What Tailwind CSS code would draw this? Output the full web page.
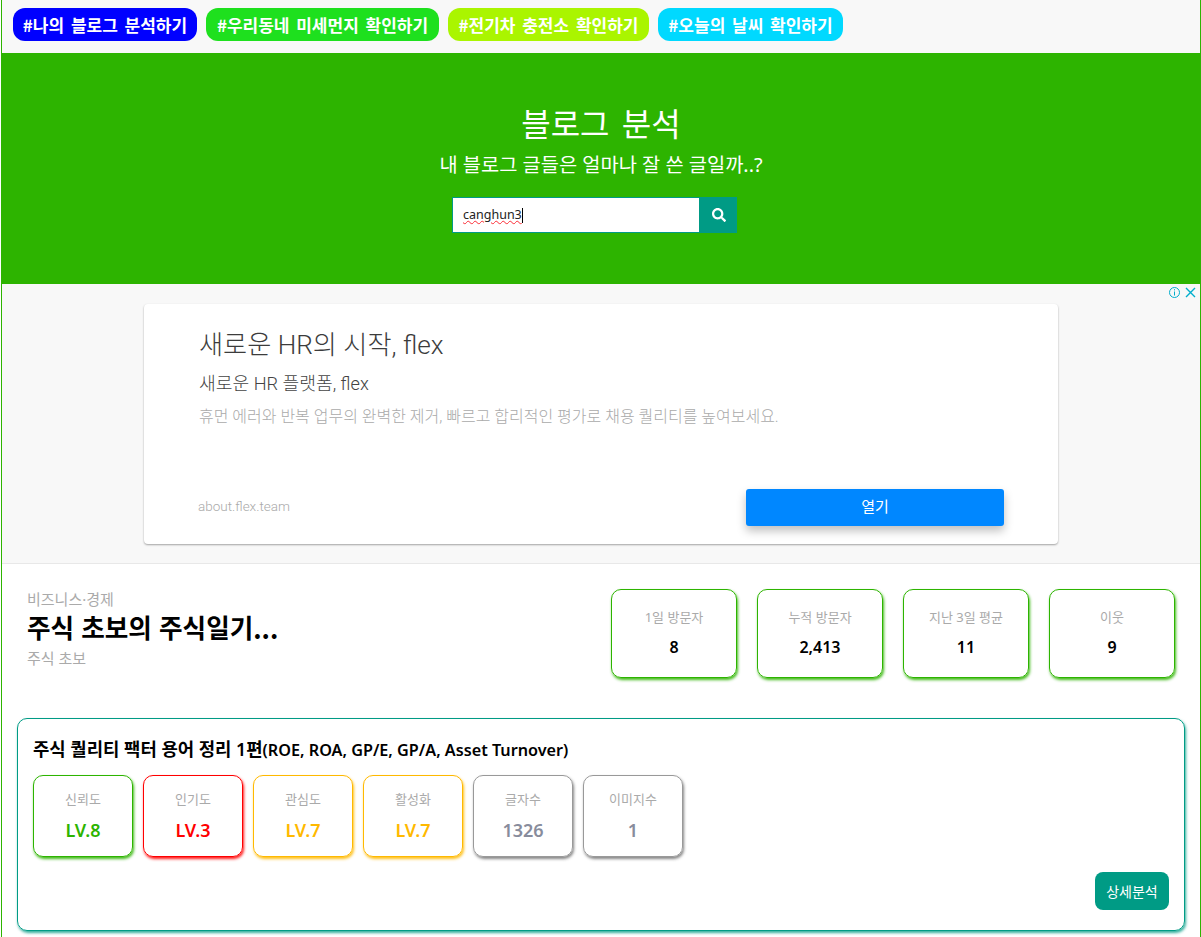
<!DOCTYPE html>
<html lang="ko">
<head>
    <meta charset="UTF-8">
    <title>블로그 분석</title>
    <script src="https://cdn.jsdelivr.net/npm/@tailwindcss/browser@4"></script>
</head>
<body class="bg-white font-['Noto_Sans','Noto_Sans_CJK_KR',sans-serif] overflow-hidden">
    <div class="ml-px w-[1200px] h-[937px] overflow-hidden border-x border-[#2db400]">
        <!-- top tags -->
        <nav class="h-[53px] bg-[#f8f8f8] flex items-start gap-[9px] pt-2 pl-3 -mx-px relative">
            <a class="h-[33px] w-[184px] rounded-xl bg-[#0000ff] text-white text-[17px] [word-spacing:2px] font-bold flex items-center justify-center font-['Noto_Sans_CJK_KR',sans-serif]">#나의 블로그 분석하기</a>
            <a class="h-[33px] w-[233px] rounded-xl bg-[#1ee01e] text-white text-[17px] [word-spacing:2px] font-bold flex items-center justify-center font-['Noto_Sans_CJK_KR',sans-serif]">#우리동네 미세먼지 확인하기</a>
            <a class="h-[33px] w-[201px] rounded-xl bg-[#aaf500] text-white text-[17px] [word-spacing:2px] font-bold flex items-center justify-center font-['Noto_Sans_CJK_KR',sans-serif]">#전기차 충전소 확인하기</a>
            <a class="h-[33px] w-[185px] rounded-xl bg-[#00d9ff] text-white text-[17px] [word-spacing:2px] font-bold flex items-center justify-center font-['Noto_Sans_CJK_KR',sans-serif]">#오늘의 날씨 확인하기</a>
        </nav>

        <!-- hero -->
        <section class="h-[231px] bg-[#2db400] flex flex-col items-center pt-[47px] text-white">
            <h1 class="text-[32px] leading-[48px] font-normal [word-spacing:4px]">블로그 분석</h1>
            <p class="text-[19.8px] leading-[27px] mt-[3px]">내 블로그 글들은 얼마나 잘 쓴 글일까..?</p>
            <div class="flex mt-[19px] mr-[13px]">
                <div class="w-[248px] h-9 bg-white border border-[#009b85] flex items-center pl-[10px] text-[12.5px] text-[#222]">
                    <span class="underline decoration-wavy decoration-red-500 decoration-1">canghun3</span><span class="w-px h-[15px] bg-black"></span>
                </div>
                <button class="w-[37px] h-9 bg-[#009b85] flex items-center justify-center">
                    <svg class="w-[14px] h-[14px]" viewBox="0 0 512 512" fill="white"><path d="M505 442.7L405.3 343c-4.5-4.5-10.6-7-17-7H372c27.6-35.3 44-79.7 44-128C416 93.1 322.9 0 208 0S0 93.1 0 208s93.1 208 208 208c48.3 0 92.7-16.4 128-44v16.3c0 6.4 2.5 12.5 7 17l99.7 99.7c9.4 9.4 24.6 9.4 33.9 0l28.3-28.3c9.4-9.4 9.4-24.6.1-34zM208 336c-70.7 0-128-57.2-128-128 0-70.7 57.2-128 128-128 70.7 0 128 57.2 128 128 0 70.7-57.2 128-128 128z"/></svg>
                </button>
            </div>
        </section>

        <!-- ad -->
        <section class="relative h-[280px] bg-[#f8f8f8] border-b border-[#e8e8e8] pt-5">
            <div class="absolute top-[2px] right-0 flex items-center gap-[3px] pr-[3px] text-[#00aecd]">
                <svg class="w-[13px] h-[13px]" viewBox="0 0 13 13" fill="none" stroke="currentColor"><circle cx="6.5" cy="6.5" r="5"/><path d="M6.5 5.5v4M6.5 3.2v1.2"/></svg>
                <svg class="w-[13px] h-[13px]" viewBox="0 0 13 13" fill="none" stroke="currentColor" stroke-width="1.4"><path d="M2 2l9 9M11 2l-9 9"/></svg>
            </div>
            <div class="ml-[142px] w-[914px] h-[240px] bg-white rounded shadow-[0_1px_2px_rgba(0,0,0,0.35)] flex flex-col pl-[55px] pr-[54px] font-['Roboto','Noto_Sans_CJK_KR',sans-serif]">
                <h2 class="text-[26.2px] leading-[32px] text-[#3c3c3c] font-light mt-[25px]">새로운 HR의 시작, flex</h2>
                <p class="text-[18.2px] leading-[24px] text-[#444] font-light mt-[11px]">새로운 HR 플랫폼, flex</p>
                <p class="text-[16px] leading-[20px] text-[#aaa] font-light mt-[11px]">휴먼 에러와 반복 업무의 완벽한 제거, 빠르고 합리적인 평가로 채용 퀄리티를 높여보세요.</p>
                <div class="flex items-center justify-between mt-auto mb-[18px]">
                    <span class="text-[13.5px] text-[#aaa] font-light -ml-px -mt-[2px]">about.flex.team</span>
                    <button class="w-[258px] h-[37px] bg-[#0087ff] rounded-[3px] text-white text-[15px] shadow-[0_5px_10px_rgba(0,0,0,0.25)]">열기</button>
                </div>
            </div>
        </section>

        <!-- blog info -->
        <section class="flex justify-between pl-[25px] pr-[25px] pt-[25px]">
            <div>
                <p class="text-[15px] leading-[21px] text-[#aaa]">비즈니스·경제</p>
                <h2 class="text-[25.6px] leading-[36px] font-bold text-black font-['Noto_Sans_CJK_KR',sans-serif] -mt-px">주식 초보의 주식일기...</h2>
                <p class="text-[15px] leading-[21px] text-[#aaa] mt-[3px]">주식 초보</p>
            </div>
            <div class="flex gap-5">
                <div class="w-[126px] h-[89px] rounded-[10px] border border-[#2db400] shadow-[1px_2px_3px_rgba(45,180,0,0.9)] flex flex-col items-center pt-[17px]">
                    <span class="text-[13px] leading-[20px] text-[#aaa]">1일 방문자</span>
                    <span class="text-[16px] leading-[24px] font-semibold text-black mt-[8px]">8</span>
                </div>
                <div class="w-[126px] h-[89px] rounded-[10px] border border-[#2db400] shadow-[1px_2px_3px_rgba(45,180,0,0.9)] flex flex-col items-center pt-[17px]">
                    <span class="text-[13px] leading-[20px] text-[#aaa]">누적 방문자</span>
                    <span class="text-[16px] leading-[24px] font-semibold text-black mt-[8px]">2,413</span>
                </div>
                <div class="w-[126px] h-[89px] rounded-[10px] border border-[#2db400] shadow-[1px_2px_3px_rgba(45,180,0,0.9)] flex flex-col items-center pt-[17px]">
                    <span class="text-[13px] leading-[20px] text-[#aaa]">지난 3일 평균</span>
                    <span class="text-[16px] leading-[24px] font-semibold text-black mt-[8px]">11</span>
                </div>
                <div class="w-[126px] h-[89px] rounded-[10px] border border-[#2db400] shadow-[1px_2px_3px_rgba(45,180,0,0.9)] flex flex-col items-center pt-[17px]">
                    <span class="text-[13px] leading-[20px] text-[#aaa]">이웃</span>
                    <span class="text-[16px] leading-[24px] font-semibold text-black mt-[8px]">9</span>
                </div>
            </div>
        </section>

        <!-- post card -->
        <section class="relative ml-[15px] mr-[15px] mt-[40px] h-[213px] rounded-[10px] border border-[#009b85] shadow-[1px_2px_3px_rgba(0,155,133,0.8)] pl-[15px] pt-[18px]">
            <h3 class="text-[16.2px] leading-[24px] font-semibold text-black"><span class="text-[17.8px]">주식 퀄리티 팩터 용어 정리 1편</span>(ROE, ROA, GP/E, GP/A, Asset Turnover)</h3>
            <div class="flex gap-[10px] mt-[13px]">
                <div class="w-[100px] h-[82px] rounded-[10px] border border-[#2db400] shadow-[1px_2px_3px_rgba(45,180,0,0.9)] flex flex-col items-center pt-[13px]">
                    <span class="text-[13px] leading-[20px] text-[#aaa]">신뢰도</span>
                    <span class="text-[18px] leading-[27px] font-semibold text-[#2db400] mt-[8px]">LV.8</span>
                </div>
                <div class="w-[100px] h-[82px] rounded-[10px] border border-[#ff0000] shadow-[1px_2px_3px_rgba(255,0,0,0.9)] flex flex-col items-center pt-[13px]">
                    <span class="text-[13px] leading-[20px] text-[#aaa]">인기도</span>
                    <span class="text-[18px] leading-[27px] font-semibold text-[#ff0000] mt-[8px]">LV.3</span>
                </div>
                <div class="w-[100px] h-[82px] rounded-[10px] border border-[#ffb900] shadow-[1px_2px_3px_rgba(255,185,0,0.9)] flex flex-col items-center pt-[13px]">
                    <span class="text-[13px] leading-[20px] text-[#aaa]">관심도</span>
                    <span class="text-[18px] leading-[27px] font-semibold text-[#ffb900] mt-[8px]">LV.7</span>
                </div>
                <div class="w-[100px] h-[82px] rounded-[10px] border border-[#ffb900] shadow-[1px_2px_3px_rgba(255,185,0,0.9)] flex flex-col items-center pt-[13px]">
                    <span class="text-[13px] leading-[20px] text-[#aaa]">활성화</span>
                    <span class="text-[18px] leading-[27px] font-semibold text-[#ffb900] mt-[8px]">LV.7</span>
                </div>
                <div class="w-[100px] h-[82px] rounded-[10px] border border-[#999] shadow-[1px_2px_3px_rgba(120,120,120,0.9)] flex flex-col items-center pt-[13px]">
                    <span class="text-[13px] leading-[20px] text-[#aaa]">글자수</span>
                    <span class="text-[18px] leading-[27px] font-semibold text-[#888c9c] mt-[8px]">1326</span>
                </div>
                <div class="w-[100px] h-[82px] rounded-[10px] border border-[#999] shadow-[1px_2px_3px_rgba(120,120,120,0.9)] flex flex-col items-center pt-[13px]">
                    <span class="text-[13px] leading-[20px] text-[#aaa]">이미지수</span>
                    <span class="text-[18px] leading-[27px] font-semibold text-[#888c9c] mt-[8px]">1</span>
                </div>
            </div>
            <button class="absolute right-[15px] bottom-[20px] w-[74px] h-[38px] rounded-[8px] bg-[#009b85] text-white text-[14px]">상세분석</button>
        </section>
    </div>
</body>
</html>
